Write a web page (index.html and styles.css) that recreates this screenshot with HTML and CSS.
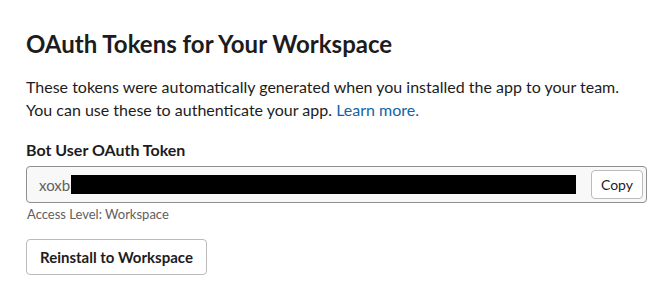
FILE: index.html
```html
<!DOCTYPE html>
<html lang="en">
<head>
    <meta charset="UTF-8">
    <title>OAuth Tokens</title>
    <link rel="stylesheet" href="styles.css">
</head>
<body>
    <div class="section">
        <h2>OAuth Tokens for Your Workspace</h2>
        <p class="intro">These tokens were automatically generated when you installed the app to your team. You can use these to authenticate your app. <a href="#">Learn more.</a></p>

        <div class="label">Bot User OAuth Token</div>
        <div class="token-field">
            <span class="token-prefix">xoxb</span>
            <span class="token-redacted"></span>
            <button class="btn btn-small">Copy</button>
        </div>
        <div class="hint">Access Level: Workspace</div>

        <button class="btn">Reinstall to Workspace</button>
    </div>
</body>
</html>
```

FILE: styles.css
```css
body {
    font-family: Lato, "Noto Sans", sans-serif;
    background-color: #fff;
    color: #1d1c1d;
    margin: 0;
}
.section {
    padding: 27px 12px 0 26px;
}
h2 {
    font-size: 24px;
    font-weight: 700;
    line-height: 34px;
    margin: 0 0 14px;
}
.intro {
    font-size: 16px;
    line-height: 23px;
    max-width: 600px;
    margin: 0 0 18px;
}
.intro a {
    color: #1264a3;
    text-decoration: none;
}
.label {
    font-size: 16px;
    font-weight: 700;
    line-height: 22px;
    margin-bottom: 5px;
}
.token-field {
    display: flex;
    align-items: center;
    width: 621px;
    height: 37px;
    box-sizing: border-box;
    border: 1px solid #8f8f8f;
    border-radius: 4px;
    background: #f8f8f8;
    padding: 0 3px 0 12px;
}
.token-prefix {
    font-size: 15px;
    color: #616061;
}
.token-redacted {
    background: #000;
    width: 505px;
    height: 19px;
    margin-left: 1px;
}
.hint {
    font-size: 13px;
    color: #616061;
    line-height: 18px;
    margin: 2px 0 16px 1px;
}
.btn {
    font-family: Lato, "Noto Sans", sans-serif;
    font-size: 15px;
    font-weight: 700;
    color: #1d1c1d;
    background: #fff;
    border: 1px solid #bbb;
    border-radius: 4px;
    height: 36px;
    padding: 0 13px;
    cursor: pointer;
}
.btn-small {
    margin-left: auto;
    height: 29px;
    font-size: 14px;
    font-weight: 400;
    padding: 0 9px;
}
```
